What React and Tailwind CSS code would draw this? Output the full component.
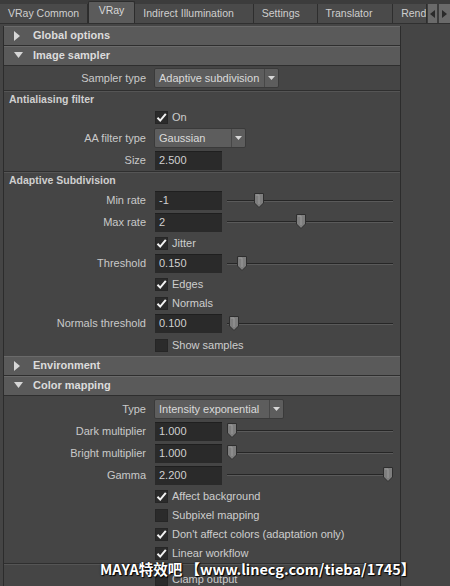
import React from 'react'

const font = { fontFamily: '"Liberation Sans", Arial, sans-serif' }

function Tri({ open }) {
  return open ? (
    <svg width="9" height="7" viewBox="0 0 9 7" className="shrink-0">
      <path d="M0 0 L9 0 L4.5 6 Z" fill="#d6d6d6" />
    </svg>
  ) : (
    <svg width="7" height="10" viewBox="0 0 7 10" className="shrink-0">
      <path d="M0 0 L6 5 L0 10 Z" fill="#d6d6d6" />
    </svg>
  )
}

function Header({ title, open }) {
  return (
    <div className="flex h-[20px] items-center border-b border-[#2e2e2e] bg-[#5a5a5a] pl-[10px] shadow-[inset_0_1px_0_#6a6a6a]">
      <div className="flex w-[19px] justify-start">
        <Tri open={open} />
      </div>
      <span className="text-[11px] font-bold text-[#dcdcdc]">{title}</span>
    </div>
  )
}

function Row({ label, children, h = 'h-[22px]' }) {
  return (
    <div className={`flex items-center ${h}`}>
      <div className="w-[142px] text-right text-[11px] text-[#c9c9c9]">{label}</div>
      <div className="ml-[8px] flex items-center">{children}</div>
    </div>
  )
}

function Field({ value }) {
  return (
    <div className="ml-[1px] flex h-[19px] w-[67px] items-center bg-[#2a2a2a] pl-[4px] text-[11px] text-[#d0d0d0] shadow-[inset_0_1px_0_#1f1f1f]">
      {value}
    </div>
  )
}

function Dropdown({ value, w }) {
  return (
    <div className={`flex h-[20px] items-center rounded-[2px] border border-[#3a3a3a] bg-[#5d5d5d] ${w}`}>
      <span className="flex-1 pl-[4px] text-[11px] text-[#dadada]">{value}</span>
      <span className="flex h-full w-[14px] items-center justify-center border-l border-[#474747]">
        <svg width="7" height="4" viewBox="0 0 7 4">
          <path d="M0 0 L7 0 L3.5 4 Z" fill="#d8d8d8" />
        </svg>
      </span>
    </div>
  )
}

function Slider({ pos }) {
  return (
    <div className="relative ml-[5px] h-[16px] w-[166px]">
      <div className="absolute left-0 right-0 top-[7px] h-[1px] bg-[#262626]" />
      <div className="absolute left-0 right-0 top-[8px] h-[1px] bg-[#5a5a5a]" />
      <svg
        width="10"
        height="15"
        viewBox="0 0 10 15"
        className="absolute top-0"
        style={{ left: `${pos}px` }}
      >
        <path d="M0.5 0.5 H9.5 V10 L5 14.5 L0.5 10 Z" fill="#7e7e7e" stroke="#2e2e2e" />
        <path d="M2 2 H5 V11" stroke="#9a9a9a" fill="none" />
      </svg>
    </div>
  )
}

function Check({ label, on, h = 'h-[20px]' }) {
  return (
    <div className={`flex items-center ${h}`}>
      <div className="w-[142px]" />
      <div className="ml-[9px] flex items-center">
        <div className="relative h-[13px] w-[13px] bg-[#2b2b2b] shadow-[inset_0_0_0_1px_#262626]">
          {on && (
            <svg width="13" height="13" viewBox="0 0 13 13" className="absolute left-0 top-0">
              <path d="M2.5 6.8 L5.2 9.6 L10.8 2.8" stroke="#f2f2f2" strokeWidth="2" fill="none" />
            </svg>
          )}
        </div>
        <span className="ml-[4px] text-[11px] text-[#cdcdcd]">{label}</span>
      </div>
    </div>
  )
}

function FrameTitle({ title, h }) {
  return (
    <div className={`flex items-center border-t border-[#2f2f2f] pl-[5px] shadow-[inset_0_1px_0_#555] ${h}`}>
      <span className="text-[10.5px] font-bold text-[#cfcfcf]">{title}</span>
    </div>
  )
}

const tabs = [
  { t: 'VRay Common', w: 'w-[88px]' },
  { t: 'VRay', w: 'w-[48px]', active: true },
  { t: 'Indirect Illumination', w: 'w-[119px]' },
  { t: 'Settings', w: 'w-[64px]' },
  { t: 'Translator', w: 'w-[76px]' },
  { t: 'Rend', w: 'w-[34px]' },
]

export default function App() {
  return (
    <div className="relative h-[586px] w-[450px] overflow-hidden bg-[#454545]" style={font}>
      {/* tab bar */}
      <div className="flex h-[24px] items-end border-b border-[#303030] bg-[#3c3c3c]">
        {tabs.map((tab) =>
          tab.active ? (
            <div
              key={tab.t}
              className={`flex h-[22px] items-center justify-center rounded-t-[2px] border-x border-t border-[#2c2c2c] bg-[#5b5b5b] pb-[4px] text-[10.5px] text-[#d8d8d8] ${tab.w}`}
            >
              {tab.t}
            </div>
          ) : (
            <div
              key={tab.t}
              className={`flex h-[19px] items-center overflow-hidden whitespace-nowrap border-r border-[#2e2e2e] bg-[#4a4a4a] pl-[8px] text-[10.5px] text-[#cfcfcf] ${tab.w}`}
            >
              {tab.t}
            </div>
          )
        )}
        <div className="flex h-[19px] flex-1 items-center gap-[2px] pl-[1px]">
          <div className="flex h-[19px] w-[9px] items-center justify-center bg-[#6a6a6a]">
            <svg width="5" height="8" viewBox="0 0 5 8">
              <path d="M5 0 L0 4 L5 8 Z" fill="#2a2a2a" />
            </svg>
          </div>
          <div className="flex h-[19px] w-[11px] items-center justify-center bg-[#6a6a6a]">
            <svg width="5" height="8" viewBox="0 0 5 8">
              <path d="M0 0 L5 4 L0 8 Z" fill="#2a2a2a" />
            </svg>
          </div>
        </div>
      </div>

      <div className="flex">
        <div className="ml-[3px] mt-[2px] w-[398px] border-x border-[#2c2c2c]">
          <Header title="Global options" />
          <Header title="Image sampler" open />
          <div className="bg-[#454545]">
            <Row label="Sampler type" h="h-[24px]">
              <Dropdown value="Adaptive subdivision" w="w-[125px]" />
            </Row>
            <FrameTitle title="Antialiasing filter" h="h-[18px]" />
            <Check label="On" on h="h-[19px]" />
            <Row label="AA filter type">
              <Dropdown value="Gaussian" w="w-[92px]" />
            </Row>
            <Row label="Size">
              <Field value="2.500" />
            </Row>
            <FrameTitle title="Adaptive Subdivision" h="h-[19px]" />
            <Row label="Min rate" h="h-[21px]">
              <Field value="-1" />
              <Slider pos={27} />
            </Row>
            <Row label="Max rate">
              <Field value="2" />
              <Slider pos={69} />
            </Row>
            <Check label="Jitter" on />
            <Row label="Threshold" h="h-[21px]">
              <Field value="0.150" />
              <Slider pos={10} />
            </Row>
            <Check label="Edges" on />
            <Check label="Normals" on h="h-[19px]" />
            <Row label="Normals threshold" h="h-[21px]">
              <Field value="0.100" />
              <Slider pos={2} />
            </Row>
            <Check label="Show samples" h="h-[22px]" />
          </div>
          <Header title="Environment" />
          <Header title="Color mapping" open />
          <div className="bg-[#454545] pt-[2px]">
            <Row label="Type">
              <Dropdown value="Intensity exponential" w="w-[130px]" />
            </Row>
            <Row label="Dark multiplier">
              <Field value="1.000" />
              <Slider pos={0} />
            </Row>
            <Row label="Bright multiplier">
              <Field value="1.000" />
              <Slider pos={0} />
            </Row>
            <Row label="Gamma">
              <Field value="2.200" />
              <Slider pos={156} />
            </Row>
            <Check label="Affect background" on />
            <Check label="Subpixel mapping" h="h-[19px]" />
            <Check label="Don't affect colors (adaptation only)" on h="h-[19px]" />
            <Check label="Linear workflow" on h="h-[19px]" />
            <div className="border-t border-[#2f2f2f] pt-[5px] shadow-[inset_0_1px_0_#555]">
              <Check label="Clamp output" h="h-[20px]" />
            </div>
          </div>
        </div>
        <div className="flex-1" />
      </div>

      {/* watermark */}
      <div
        className="absolute left-[100px] top-[558px] whitespace-nowrap text-[14.5px] font-bold tracking-[0px] text-white [text-shadow:0_0_2px_#000,1px_1px_1px_#000]"
        style={{ fontFamily: '"Noto Sans CJK SC", "Liberation Sans", sans-serif' }}
      >
        MAYA特效吧 【www.linecg.com/tieba/1745】
      </div>
    </div>
  )
}
